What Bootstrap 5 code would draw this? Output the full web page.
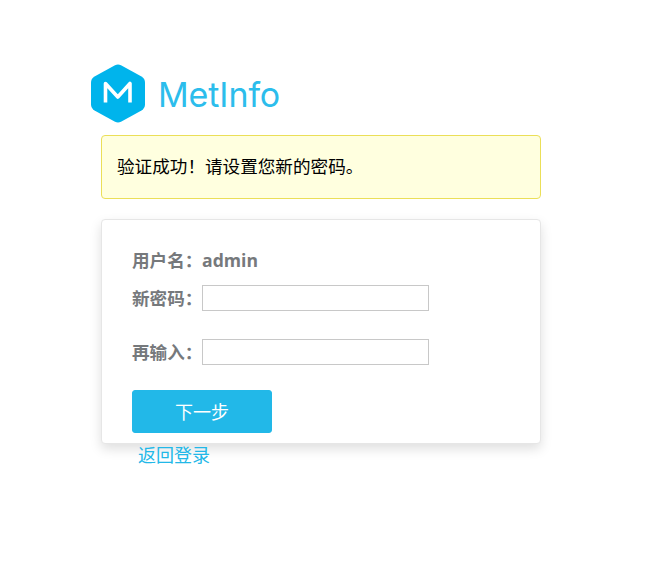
<!DOCTYPE html>
<html lang="zh-CN">
<head>
<meta charset="utf-8">
<title>MetInfo</title>
<link href="https://cdn.jsdelivr.net/npm/bootstrap@5.3.0/dist/css/bootstrap.min.css" rel="stylesheet">
<style>
body{background:#fff;font-family:"Noto Sans CJK SC",sans-serif;font-size:18px;}
.page-box{width:440px;margin-left:101px;padding-top:64px;}
.logo-line{margin-left:-10px;height:71px;gap:13px;}
.logo-word{font-family:"Inter",sans-serif;font-weight:400;font-size:34px;line-height:61px;color:#2cbdec;letter-spacing:-.1px;}
.note-box{height:64px;background:#ffffdf;border:1px solid #ebdf58;border-radius:4px;padding-left:15px;color:#000;font-size:17.6px;line-height:60px;margin-bottom:20px;}
.form-box{height:225px;border:1px solid #e6e6e6;border-radius:4px;box-shadow:0 5px 12px rgba(0,0,0,.13);padding:26px 30px 0;background:#fff;}
.field-line{font-weight:700;font-size:17.6px;color:#76797c;line-height:30px;}
.field-name{width:70px;flex:none;white-space:nowrap;}
.field-value{font-family:"Open Sans",sans-serif;}
.field-input{width:227px;height:26px;border:1px solid #c8c8c8;background:#fff;padding:0 4px;outline:0;border-radius:0;}
.line-a{height:27px;margin-bottom:12px;}
.line-b{height:26px;margin-bottom:28px;}
.line-c{height:26px;margin-bottom:25px;}
.go-btn{width:140px;height:43px;background:#22b8e8;border-color:#22b8e8;color:#fff;font-size:18px;padding:0;border-radius:3px;}
.go-btn:hover{background:#22b8e8;border-color:#22b8e8;color:#fff;}
.back-link{display:block;margin-left:37px;color:#22b8e8;text-decoration:none;line-height:20px;}
</style>
</head>
<body>
<div class="page-box">
  <div class="logo-line d-flex align-items-start">
    <svg width="54" height="59" viewBox="0 0 54 59" aria-hidden="true">
      <path d="M24 1.2Q27 -.2 30 1.2L50.5 12.6Q54 14.8 54 18.5V40.5Q54 44.2 50.5 46.4L30 57.8Q27 59.2 24 57.8L3.5 46.4Q0 44.2 0 40.5V18.5Q0 14.8 3.5 12.6Z" fill="#00b4ec"/>
      <path d="M14.5 38.5V19.5L26.8 33L39 19.5V38.5" fill="none" stroke="#fff" stroke-width="3.6" stroke-linejoin="round"/>
    </svg>
    <span class="logo-word">MetInfo</span>
  </div>
  <div class="note-box">验证成功&#xFF01;请设置您新的密码。</div>
  <div class="form-box">
    <div class="field-line line-a d-flex align-items-center"><span class="field-name">用户名&#xFF1A;</span><span class="field-value">admin</span></div>
    <div class="field-line line-b d-flex align-items-center"><label class="field-name">新密码&#xFF1A;</label><input class="field-input" type="password" aria-label="新密码"></div>
    <div class="field-line line-c d-flex align-items-center"><label class="field-name">再输入&#xFF1A;</label><input class="field-input" type="password" aria-label="再输入"></div>
    <button type="button" class="btn go-btn">下一步</button>
  </div>
  <a class="back-link" href="#">返回登录</a>
</div>
<script src="https://cdn.jsdelivr.net/npm/bootstrap@5.3.0/dist/js/bootstrap.bundle.min.js"></script>
</body>
</html>
